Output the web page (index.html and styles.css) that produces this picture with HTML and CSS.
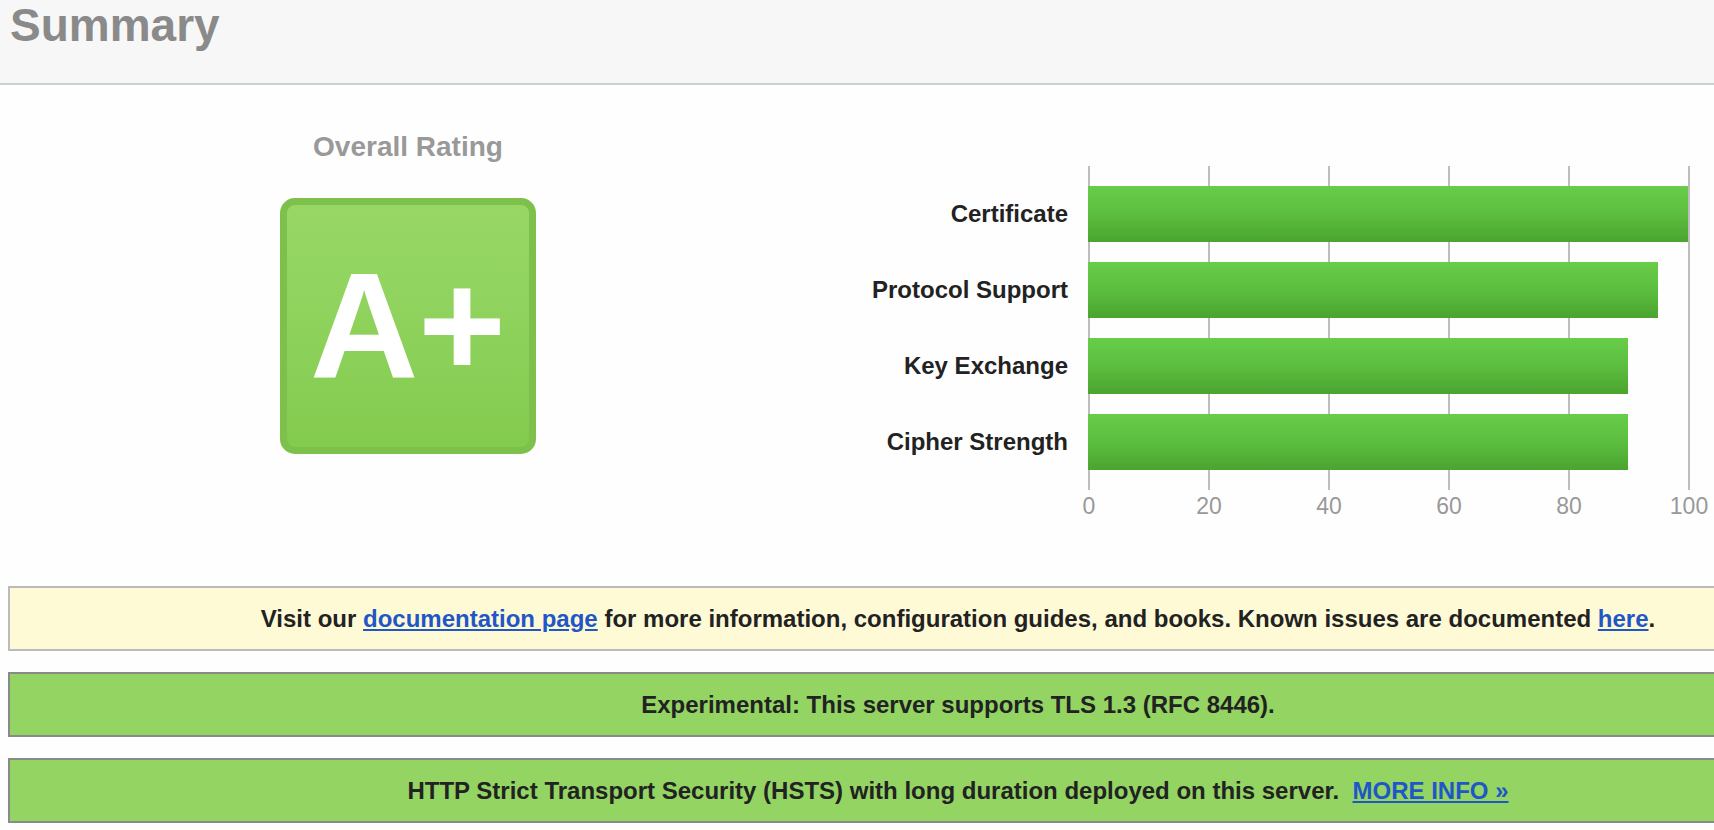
FILE: index.html
```html
<!DOCTYPE html>
<html lang="en">
<head>
<meta charset="utf-8">
<title>Summary</title>
<link rel="stylesheet" href="styles.css">
</head>
<body>
<div class="page">
  <header class="summary-head">
    <h1 class="summary-title">Summary</h1>
  </header>

  <section class="summary-body">
    <div class="rating">
      <div class="rating-title">Overall Rating</div>
      <div class="grade"><span class="grade-text">A+</span></div>
    </div>

    <div class="chart">
      <div class="chart-labels">
        <div class="chart-label">Certificate</div>
        <div class="chart-label">Protocol Support</div>
        <div class="chart-label">Key Exchange</div>
        <div class="chart-label">Cipher Strength</div>
      </div>
      <div class="plot">
        <div class="bar-row"><div class="bar" style="width:600px"></div></div>
        <div class="bar-row"><div class="bar" style="width:570px"></div></div>
        <div class="bar-row"><div class="bar" style="width:540px"></div></div>
        <div class="bar-row"><div class="bar" style="width:540px"></div></div>
      </div>
      <div class="axis-spacer"></div>
      <div class="axis">
        <span class="tick">0</span>
        <span class="tick">20</span>
        <span class="tick">40</span>
        <span class="tick">60</span>
        <span class="tick">80</span>
        <span class="tick">100</span>
      </div>
    </div>
  </section>

  <section class="notices">
    <div class="notice notice-info">
      <span>Visit our <a href="#">documentation page</a> for more information, configuration guides, and books. Known issues are documented <a href="#">here</a>.</span>
    </div>
    <div class="notice notice-good">
      <span>Experimental: This server supports TLS 1.3 (RFC 8446).</span>
    </div>
    <div class="notice notice-good">
      <span>HTTP Strict Transport Security (HSTS) with long duration deployed on this server.&nbsp; <a href="#">MORE INFO »</a></span>
    </div>
  </section>
</div>
</body>
</html>
```

FILE: styles.css
```css
html, body {
  margin: 0;
  padding: 0;
  overflow: hidden;
  background: #fefefe;
}

body {
  font-family: "Liberation Sans", Arial, Helvetica, sans-serif;
  color: #222;
}

.page {
  width: 1916px;
}

.summary-head {
  height: 83px;
  background: #f7f7f7;
  border-bottom: 2px solid #c9d3d3;
}

.summary-title {
  margin: 0;
  padding-left: 10px;
  font-size: 46px;
  line-height: 50px;
  font-weight: bold;
  color: #8a8a8a;
}

.summary-body {
  display: flex;
  align-items: flex-start;
}

.rating {
  width: 816px;
  display: flex;
  flex-direction: column;
  align-items: center;
  padding-top: 46px;
}

.rating-title {
  font-size: 28px;
  line-height: 32px;
  font-weight: bold;
  color: #999;
}

.grade {
  margin-top: 35px;
  width: 256px;
  height: 256px;
  box-sizing: border-box;
  border: 7px solid #7dc04b;
  border-radius: 15px;
  background: linear-gradient(#98d766, #8ed25c 50%, #83cb4f);
  display: flex;
  align-items: center;
  justify-content: center;
}

.grade-text {
  font-size: 150px;
  line-height: 150px;
  font-weight: bold;
  color: #fff;
  margin-top: -2px;
}

.chart {
  margin-top: 81px;
  display: grid;
  grid-template-columns: 252px 602px;
  column-gap: 20px;
}

.chart-labels {
  display: flex;
  flex-direction: column;
  gap: 20px;
  padding: 20px 0;
}

.chart-label {
  height: 56px;
  display: flex;
  align-items: center;
  justify-content: flex-end;
  font-size: 24px;
  font-weight: bold;
  color: #222;
}

.plot {
  height: 324px;
  box-sizing: border-box;
  padding: 20px 0;
  display: flex;
  flex-direction: column;
  gap: 20px;
  background: repeating-linear-gradient(to right, #bdbdbd 0, #bdbdbd 2px, transparent 2px, transparent 120px);
}

.bar-row {
  height: 56px;
}

.bar {
  height: 56px;
  background: linear-gradient(#68cd4a, #5cbe3f 50%, #4aa42f);
}

.axis {
  display: grid;
  grid-template-columns: repeat(6, 120px);
  margin-left: -59px;
  padding-top: 4px;
}

.tick {
  text-align: center;
  font-size: 23px;
  line-height: 24px;
  color: #999;
}

.notices {
  padding: 68px 0 0 8px;
  display: flex;
  flex-direction: column;
  gap: 21px;
}

.notice {
  width: 1900px;
  height: 65px;
  box-sizing: border-box;
  border: 2px solid #bbb;
  display: flex;
  align-items: center;
  justify-content: center;
  font-size: 24px;
  font-weight: bold;
  color: #222;
}

.notice-info {
  background: #fffad6;
}

.notice-good {
  background: #93d462;
  border-color: #8a8a8a;
}

.notice a {
  color: #1f56c8;
  text-decoration: underline;
}
```
